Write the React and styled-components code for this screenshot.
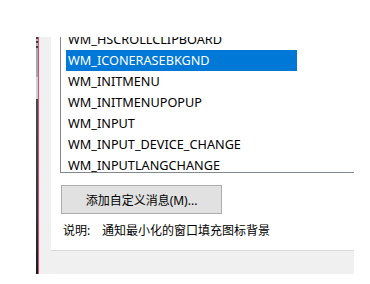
import React from 'react'
import styled, { createGlobalStyle } from 'styled-components'

const GlobalStyle = createGlobalStyle`
    body {
        margin: 0;
        background: #ffffff;
        font-family: "Noto Sans", "Noto Sans CJK SC", sans-serif;
        font-size: 12px;
        color: #000;
    }
`

const messages = [
    'WM_HSCROLLCLIPBOARD',
    'WM_ICONERASEBKGND',
    'WM_INITMENU',
    'WM_INITMENUPOPUP',
    'WM_INPUT',
    'WM_INPUT_DEVICE_CHANGE',
    'WM_INPUTLANGCHANGE',
    'WM_INPUTLANGCHANGEREQUEST',
]

function App() {
    const selected = 'WM_ICONERASEBKGND'
    return (
        <Screen>
            <GlobalStyle />
            <Window>
                <EdgeStrip />
                <AccentLine />
                <Dialog>
                    <TabPage>
                        <ListBox>
                            <ListInner>
                                {messages.map((m) => (
                                    <Item key={m} $selected={m === selected}>{m}</Item>
                                ))}
                            </ListInner>
                        </ListBox>
                        <Button>添加自定义消息(M)...</Button>
                        <Description>
                            <Label>说明:</Label>
                            <span>通知最小化的窗口填充图标背景</span>
                        </Description>
                    </TabPage>
                </Dialog>
            </Window>
        </Screen>
    )
}

export default App

const Screen = styled.div`
    padding: 37px 0 0 36px;
`

const Window = styled.div`
    display: flex;
    width: 318px;
    height: 237px;
    overflow: hidden;
`

const EdgeStrip = styled.div`
    flex: 0 0 2px;
    background: linear-gradient(
        to bottom,
        #3c3c3c 0px, #3c3c3c 2px, #b4b4b4 2px, #b4b4b4 4px,
        #3c3c3c 4px, #3c3c3c 6px, #b4b4b4 6px, #b4b4b4 9px,
        #3c3c3c 9px, #3c3c3c 11px, #a8a8a8 11px, #a8a8a8 40px,
        #cfcfcf 40px, #cfcfcf 62px, #4a4a4a 62px, #333 180px, #1a1a1a 237px
    );
`

const AccentLine = styled.div`
    flex: 0 0 1px;
    background: #e3467d;
`

const Dialog = styled.div`
    flex: 1;
    min-width: 0;
    background: #f0f0f0;
`

const TabPage = styled.div`
    margin-left: 12px;
    height: 213px;
    padding-left: 9px;
    background: #ffffff;
    border-bottom: 1px solid #dadada;
    display: flex;
    flex-direction: column;
    align-items: flex-start;
`

const ListBox = styled.div`
    width: 320px;
    height: 135px;
    flex-shrink: 0;
    border-left: 1px solid #828790;
    border-bottom: 1px solid #828790;
    overflow: hidden;
`

const ListInner = styled.ul`
    margin: -8px 0 0;
    padding: 0;
    list-style: none;
`

const Item = styled.li`
    box-sizing: border-box;
    margin-left: 5px;
    width: 231px;
    height: 21px;
    line-height: 21px;
    padding-left: 2px;
    font-size: 12.7px;
    white-space: nowrap;
    background: ${props => props.$selected ? '#0078d7' : 'transparent'};
    color: ${props => props.$selected ? '#ffffff' : '#000000'};
`

const Button = styled.button`
    box-sizing: border-box;
    margin: 12px 0 0 1px;
    width: 161px;
    height: 29px;
    padding: 0;
    background: #e1e1e1;
    border: 1px solid #adadad;
    border-radius: 0;
    font-family: inherit;
    font-size: 12px;
    color: #000;
`

const Description = styled.div`
    display: flex;
    margin-top: 9px;
    padding-left: 3px;
    line-height: 16px;
    white-space: nowrap;
`

const Label = styled.span`
    width: 39px;
`
